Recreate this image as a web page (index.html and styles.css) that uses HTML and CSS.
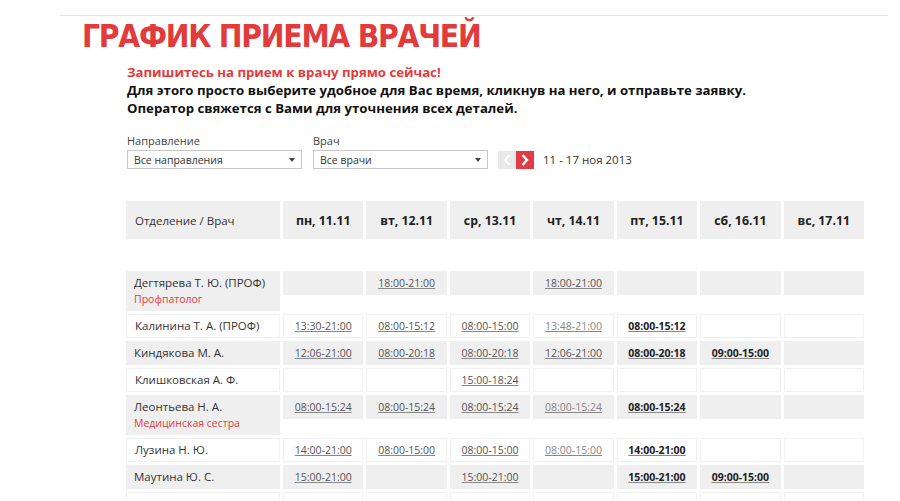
FILE: index.html
```html
<!DOCTYPE html>
<html lang="ru">
<head>
<meta charset="utf-8">
<title>График приема врачей</title>
<link rel="stylesheet" href="styles.css">
</head>
<body>
<div class="page">
  <div class="topline"></div>
  <h1 class="title">ГРАФИК ПРИЕМА ВРАЧЕЙ</h1>
  <div class="content">
    <div class="intro">
      <p class="intro-red">Запишитесь на прием к врачу прямо сейчас!</p>
      <p>Для этого просто выберите удобное для Вас время, кликнув на него, и отправьте заявку.</p>
      <p>Оператор свяжется с Вами для уточнения всех деталей.</p>
    </div>
    <div class="filters">
      <div class="field">
        <label class="label">Направление</label>
        <div class="select"><span>Все направления</span><span class="caret"></span></div>
      </div>
      <div class="field">
        <label class="label">Врач</label>
        <div class="select"><span>Все врачи</span><span class="caret"></span></div>
      </div>
      <div class="week">
        <div class="nav">
          <span class="nav-btn prev"><svg width="8" height="12" viewBox="0 0 8 12"><path d="M6.5 1 L2 6 L6.5 11" fill="none" stroke="#fff" stroke-width="2.4"/></svg></span>
          <span class="nav-btn next"><svg width="8" height="12" viewBox="0 0 8 12"><path d="M1.5 1 L6 6 L1.5 11" fill="none" stroke="#fff" stroke-width="2.4"/></svg></span>
        </div>
        <span class="range">11 - 17 ноя 2013</span>
      </div>
    </div>

    <div class="grid head">
      <div class="hcell first">Отделение / Врач</div>
      <div class="hcell">пн, 11.11</div>
      <div class="hcell">вт, 12.11</div>
      <div class="hcell">ср, 13.11</div>
      <div class="hcell">чт, 14.11</div>
      <div class="hcell">пт, 15.11</div>
      <div class="hcell">сб, 16.11</div>
      <div class="hcell">вс, 17.11</div>
    </div>

    <div class="grid body">
      <div class="cell name g tall"><span>Дегтярева Т. Ю. (ПРОФ)</span><span class="spec">Профпатолог</span></div>
      <div class="cell g"></div>
      <div class="cell g"><a class="t">18:00-21:00</a></div>
      <div class="cell g"></div>
      <div class="cell g"><a class="t">18:00-21:00</a></div>
      <div class="cell g"></div>
      <div class="cell g"></div>
      <div class="cell g"></div>

      <div class="cell name w"><span>Калинина Т. А. (ПРОФ)</span></div>
      <div class="cell w"><a class="t">13:30-21:00</a></div>
      <div class="cell w"><a class="t">08:00-15:12</a></div>
      <div class="cell w"><a class="t">08:00-15:00</a></div>
      <div class="cell w"><a class="t dim">13:48-21:00</a></div>
      <div class="cell w"><a class="t b">08:00-15:12</a></div>
      <div class="cell w"></div>
      <div class="cell w"></div>

      <div class="cell name g"><span>Киндякова М. А.</span></div>
      <div class="cell g"><a class="t">12:06-21:00</a></div>
      <div class="cell g"><a class="t">08:00-20:18</a></div>
      <div class="cell g"><a class="t">08:00-20:18</a></div>
      <div class="cell g"><a class="t">12:06-21:00</a></div>
      <div class="cell g"><a class="t b">08:00-20:18</a></div>
      <div class="cell g"><a class="t b">09:00-15:00</a></div>
      <div class="cell g"></div>

      <div class="cell name w"><span>Клишковская А. Ф.</span></div>
      <div class="cell w"></div>
      <div class="cell w"></div>
      <div class="cell w"><a class="t">15:00-18:24</a></div>
      <div class="cell w"></div>
      <div class="cell w"></div>
      <div class="cell w"></div>
      <div class="cell w"></div>

      <div class="cell name g tall"><span>Леонтьева Н. А.</span><span class="spec">Медицинская сестра</span></div>
      <div class="cell g"><a class="t">08:00-15:24</a></div>
      <div class="cell g"><a class="t">08:00-15:24</a></div>
      <div class="cell g"><a class="t">08:00-15:24</a></div>
      <div class="cell g"><a class="t dim">08:00-15:24</a></div>
      <div class="cell g"><a class="t b">08:00-15:24</a></div>
      <div class="cell g"></div>
      <div class="cell g"></div>

      <div class="cell name w"><span>Лузина Н. Ю.</span></div>
      <div class="cell w"><a class="t">14:00-21:00</a></div>
      <div class="cell w"><a class="t">08:00-15:00</a></div>
      <div class="cell w"><a class="t">08:00-15:00</a></div>
      <div class="cell w"><a class="t dim">08:00-15:00</a></div>
      <div class="cell w"><a class="t b">14:00-21:00</a></div>
      <div class="cell w"></div>
      <div class="cell w"></div>

      <div class="cell name g"><span>Маутина Ю. С.</span></div>
      <div class="cell g"><a class="t">15:00-21:00</a></div>
      <div class="cell g"></div>
      <div class="cell g"><a class="t">15:00-21:00</a></div>
      <div class="cell g"></div>
      <div class="cell g"><a class="t b">15:00-21:00</a></div>
      <div class="cell g"><a class="t b">09:00-15:00</a></div>
      <div class="cell g"></div>

      <div class="cell name w"></div>
      <div class="cell w"></div>
      <div class="cell w"></div>
      <div class="cell w"></div>
      <div class="cell w"></div>
      <div class="cell w"></div>
      <div class="cell w"></div>
      <div class="cell w"></div>
    </div>
  </div>
</div>
</body>
</html>
```

FILE: styles.css
```css
html, body {
  margin: 0;
  padding: 0;
  background: #fff;
  height: 501px;
  overflow: hidden;
}
body {
  font-family: "Open Sans", "DejaVu Sans", sans-serif;
  color: #333;
}
.page {
  padding-top: 15px;
}
.topline {
  margin-left: 60px;
  width: 828px;
  border-top: 1px solid #e4e4e4;
}
.title {
  margin: 3px 0 0 82px;
  font-family: "DejaVu Sans Condensed", "Liberation Sans Narrow", "Roboto", sans-serif;
  font-stretch: condensed;
  font-weight: bold;
  font-size: 31.5px;
  line-height: 34px;
  color: #e23b3b;
  letter-spacing: -1.25px;
}
.content {
  margin-left: 126px;
}
.intro {
  margin-top: 10px;
  padding-left: 1px;
}
.intro p {
  margin: 0;
  font-size: 13.2px;
  font-weight: bold;
  line-height: 18px;
  color: #111;
}
.intro .intro-red {
  color: #e23b3b;
}
.filters {
  display: flex;
  align-items: flex-end;
  margin-top: 17px;
  padding-left: 1px;
}
.field {
  display: flex;
  flex-direction: column;
  margin-right: 11px;
}
.label {
  font-size: 11px;
  line-height: 14px;
  color: #444;
  margin-bottom: 2px;
}
.select {
  height: 17px;
  border: 1px solid #c8c8c8;
  background: #fff;
  display: flex;
  align-items: center;
  justify-content: space-between;
  padding: 0 6px;
  box-sizing: content-box;
  width: 161px;
  font-size: 10.5px;
  color: #333;
}
.caret {
  width: 0;
  height: 0;
  border-left: 3px solid transparent;
  border-right: 3px solid transparent;
  border-top: 4px solid #444;
}
.week {
  display: flex;
  align-items: center;
  height: 19px;
}
.nav {
  display: flex;
  margin-left: -1px;
}
.nav-btn {
  width: 18px;
  height: 18px;
  display: flex;
  align-items: center;
  justify-content: center;
}
.nav-btn.prev {
  background: #e9e9e9;
}
.nav-btn.next {
  background: #e23b45;
}
.range {
  margin-left: 9px;
  font-size: 11.5px;
  color: #333;
}
.grid {
  display: grid;
  grid-template-columns: 154px repeat(7, 1fr);
  width: 738px;
  column-gap: 3px;
  row-gap: 3px;
}
.head {
  margin-top: 32px;
}
.hcell {
  height: 38px;
  background: #efefef;
  display: flex;
  align-items: center;
  justify-content: center;
  font-size: 12.3px;
  font-weight: bold;
  color: #222;
}
.hcell.first {
  justify-content: flex-start;
  padding-left: 9px;
  font-weight: normal;
  color: #333;
  font-size: 11.5px;
}
.body {
  margin-top: 32px;
}
.cell {
  height: 24px;
  display: flex;
  align-items: center;
  justify-content: center;
  box-sizing: border-box;
}
.cell.g {
  background: #efefef;
}
.cell.w {
  background: #fff;
  border: 1px solid #f1f1f1;
}
.name {
  flex-direction: column;
  align-items: flex-start;
  justify-content: center;
  padding-left: 8px;
  font-size: 11.5px;
  color: #333;
  line-height: 16px;
}
.tall {
  height: 40px;
}
.spec {
  color: #e23b3b;
  font-size: 10.5px;
}
.t {
  font-size: 10.5px;
  color: #555;
  text-decoration: underline;
  text-decoration-color: #888;
}
.t.dim {
  color: #888;
}
.t.b {
  font-weight: bold;
  color: #222;
}
```
